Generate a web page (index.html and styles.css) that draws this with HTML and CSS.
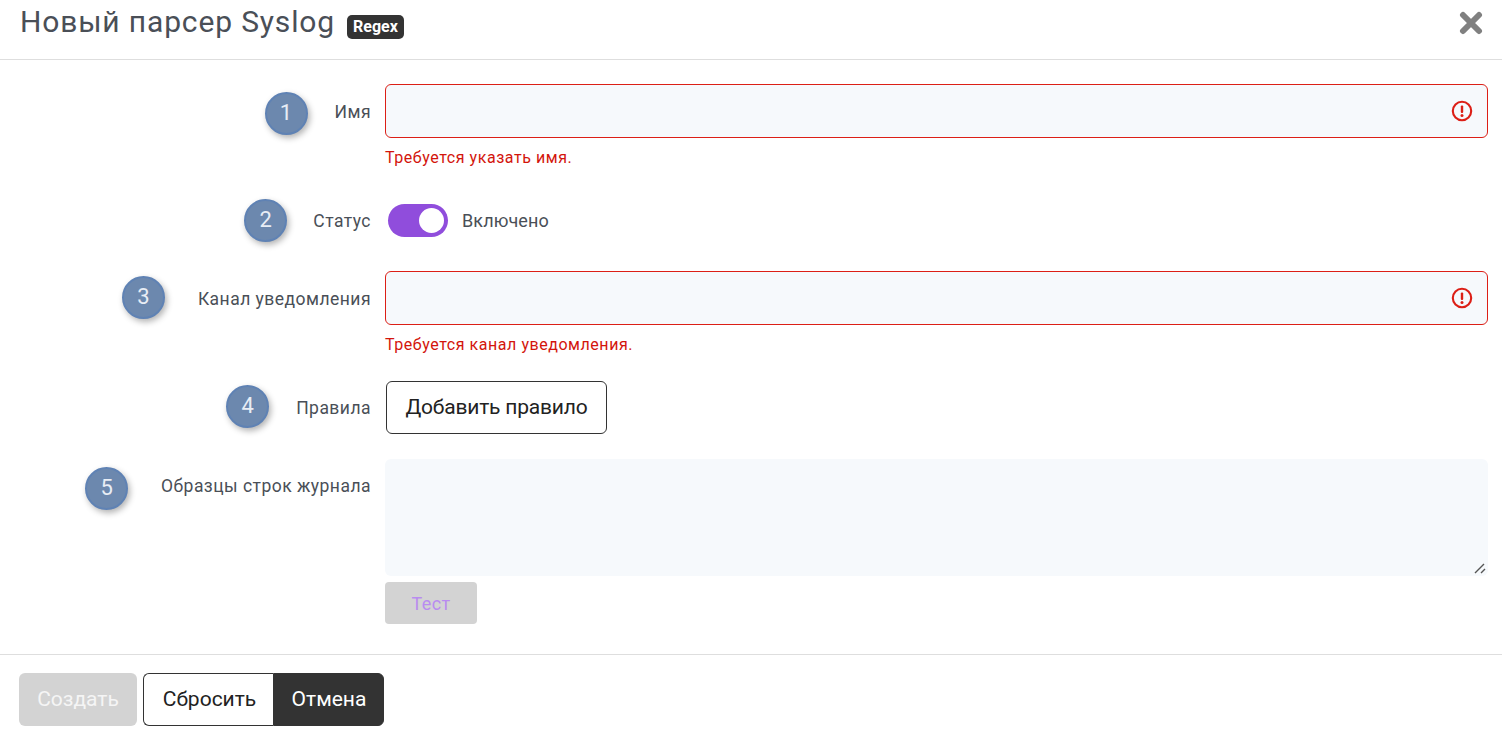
FILE: index.html
```html
<!DOCTYPE html>
<html lang="ru">
<head>
<meta charset="utf-8">
<title>Новый парсер Syslog</title>
<link rel="stylesheet" href="styles.css">
</head>
<body>
<div class="modal">
  <header class="modal-header">
    <h1 class="title">Новый парсер Syslog</h1>
    <span class="tag">Regex</span>
    <button class="close" type="button" aria-label="Закрыть">
      <svg width="24" height="24" viewBox="0 0 24 24"><path d="M4 4L20 20M20 4L4 20" stroke="#808080" stroke-width="6" stroke-linecap="round"/></svg>
    </button>
  </header>
  <form class="form">
    <div class="row row-name">
      <label class="label"><span class="label-text">Имя<span class="step step-1">1</span></span></label>
      <div class="field">
        <div class="input invalid">
          <svg class="alert" width="22" height="22" viewBox="0 0 22 22"><circle cx="11" cy="11" r="9.2" fill="none" stroke="#dc1f16" stroke-width="2.1"/><rect x="9.8" y="5.5" width="2.4" height="7.5" rx="1" fill="#dc1f16"/><circle cx="11" cy="15.6" r="1.5" fill="#dc1f16"/></svg>
        </div>
        <p class="error">Требуется указать имя.</p>
      </div>
    </div>
    <div class="row row-status">
      <label class="label"><span class="label-text">Статус<span class="step step-2">2</span></span></label>
      <div class="field switch-field">
        <span class="switch"><span class="knob"></span></span>
        <span class="switch-text">Включено</span>
      </div>
    </div>
    <div class="row row-channel">
      <label class="label"><span class="label-text">Канал уведомления<span class="step step-3">3</span></span></label>
      <div class="field">
        <div class="input invalid">
          <svg class="alert" width="22" height="22" viewBox="0 0 22 22"><circle cx="11" cy="11" r="9.2" fill="none" stroke="#dc1f16" stroke-width="2.1"/><rect x="9.8" y="5.5" width="2.4" height="7.5" rx="1" fill="#dc1f16"/><circle cx="11" cy="15.6" r="1.5" fill="#dc1f16"/></svg>
        </div>
        <p class="error">Требуется канал уведомления.</p>
      </div>
    </div>
    <div class="row row-rules">
      <label class="label"><span class="label-text">Правила<span class="step step-4">4</span></span></label>
      <div class="field"><button class="btn btn-outline btn-add" type="button">Добавить правило</button></div>
    </div>
    <div class="row row-samples">
      <label class="label"><span class="label-text">Образцы строк журнала<span class="step step-5">5</span></span></label>
      <div class="field">
        <div class="textarea-wrap">
          <textarea class="textarea"></textarea>
          <svg class="grip" width="14" height="14" viewBox="0 0 14 14"><path d="M2 12L11 3M8 12L12 8" stroke="#555" stroke-width="1.4" fill="none"/></svg>
        </div>
        <button class="btn-test" type="button" disabled>Тест</button>
      </div>
    </div>
  </form>
  <footer class="modal-footer">
    <button class="btn btn-disabled" type="button" disabled>Создать</button>
    <div class="btn-group">
      <button class="btn btn-reset" type="button">Сбросить</button>
      <button class="btn btn-cancel" type="button">Отмена</button>
    </div>
  </footer>
</div>
</body>
</html>
```
FILE: styles.css
```css
* { box-sizing: border-box; }
html, body { margin: 0; height: 100%; overflow: hidden; background: #fff; }
body { font-family: Roboto, "Noto Sans", sans-serif; color: #4a4f57; }
button { font-family: inherit; }

.modal { width: 1502px; height: 742px; display: flex; flex-direction: column; }

.modal-header { height: 60px; border-bottom: 1px solid #dedede; display: flex; align-items: center; padding: 0 18px 15px 20px; }
.title { margin: 0; font-size: 30px; font-weight: 400; line-height: 44px; letter-spacing: 0.85px; color: #4a4f57; }
.tag { margin: 9px 0 0 12px; background: #333; color: #fff; font-size: 16px; font-weight: 700; line-height: 24px; height: 24px; padding: 0 6px; border-radius: 5px; }
.close { margin: 0 0 0 auto; padding: 0; border: 0; background: none; width: 24px; height: 24px; display: block; transform: translate(-1px, 1px); }
.close svg { display: block; }

.form { flex: 1; padding-top: 24px; }
.row { display: grid; grid-template-columns: 370px 1fr; column-gap: 15px; padding-right: 14px; }
.row-status { margin-top: 35px; }
.row-channel { margin-top: 32px; }
.row-rules { margin-top: 26px; }
.row-samples { margin-top: 23px; }

.label { font-size: 17.5px; line-height: 56px; text-align: right; color: #4a4f57; letter-spacing: 0.47px; }
.label-text { position: relative; display: inline-block; margin-right: -1px; }
.row-status .label { line-height: 36px; }
.row-channel .label { line-height: 56px; }
.row-rules .label { line-height: 55px; }
.row-samples .label { line-height: 54px; }

.step { position: absolute; top: 50%; width: 43px; height: 43px; border-radius: 50%; background: #6c88ae; border: 2px solid #5f82b4; box-shadow: 2px 3px 6px rgba(0,0,0,.3); color: #e8edf5; font-size: 22px; line-height: 38px; text-align: center; letter-spacing: 0; }
.step-1 { right: calc(100% + 27px); margin-top: -20px; }
.step-2 { right: calc(100% + 26px); margin-top: -22px; }
.step-3 { right: calc(100% + 33px); margin-top: -23px; }
.step-4 { right: calc(100% + 27px); margin-top: -24px; }
.step-5 { right: calc(100% + 33px); margin-top: -19px; }

.input { height: 54px; background: #f6f9fc; border: 1px solid #dc1f16; border-radius: 6px; display: flex; align-items: center; justify-content: flex-end; padding-right: 14px; }
.alert { display: block; }
.error { margin: 10px 0 0; font-size: 16px; line-height: 20px; color: #d3150c; letter-spacing: 0.55px; }

.switch-field { display: flex; align-items: center; height: 34px; padding-left: 3px; }
.switch { width: 60px; height: 33px; border-radius: 17px; background: #904ddc; display: flex; align-items: center; justify-content: flex-end; padding-right: 4px; }
.knob { width: 25px; height: 25px; border-radius: 50%; background: #fff; }
.switch-text { margin-left: 14px; font-size: 18px; letter-spacing: 0.1px; color: #4a4f57; }

.btn { height: 53px; font-size: 21px; line-height: 1; padding: 0 19px; border-radius: 6px; }
.btn-outline { background: #fff; border: 1px solid #333; color: #222; }
.btn-add { margin-left: 1px; display: block; width: 221px; padding: 0; letter-spacing: -0.2px; }

.textarea-wrap { position: relative; }
.textarea { display: block; width: 100%; height: 117px; background: #f6f9fc; border: 0; border-radius: 6px; margin: 0; resize: none; }
.grip { position: absolute; right: 1px; bottom: 1px; display: block; }
.btn-test { display: block; margin-top: 6px; width: 92px; height: 42px; background: #d3d3d3; border: 0; border-radius: 4px; color: #b98cf0; font-size: 18px; padding: 0; letter-spacing: 0.4px; }

.modal-footer { height: 88px; border-top: 1px solid #dedede; display: flex; align-items: flex-start; padding: 18px 0 0 19px; gap: 6px; }
.btn-disabled { width: 118px; background: #d3d3d3; border: 0; color: #f5f5f5; padding: 0; }
.btn-group { display: flex; }
.btn-reset { width: 130px; background: #fff; border: 1px solid #333; border-right: 0; border-radius: 6px 0 0 6px; color: #222; padding: 0 0 0 2px; }
.btn-cancel { width: 111px; background: #333; border: 1px solid #333; color: #fff; border-radius: 0 6px 6px 0; padding: 0 0 0 1px; }
```
